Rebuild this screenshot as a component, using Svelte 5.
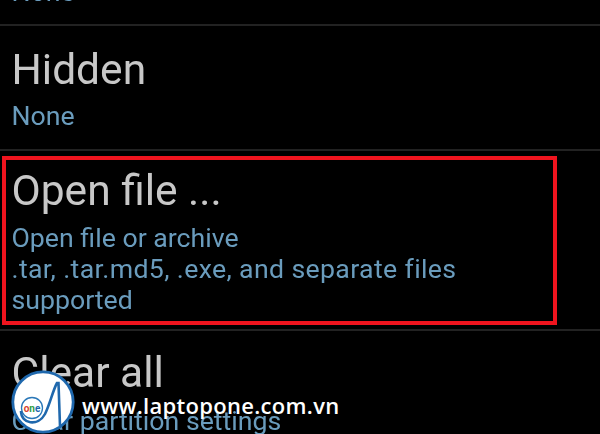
<script>
  const rows = [
    { kind: 'first', title: null, lines: ['None'] },
    { kind: 'hidden', title: 'Hidden', lines: ['None'] },
    {
      kind: 'open',
      title: 'Open file ...',
      lines: ['Open file or archive', '.tar, .tar.md5, .exe, and separate files', 'supported'],
      marked: true
    },
    { kind: 'clear', title: 'Clear all', lines: ['Clear partition settings'] }
  ];
</script>

<div class="screen">
  <div class="list">
    {#each rows as row}
      <div class="row {row.kind}">
        {#if row.title}
          <div class="title">{row.title}</div>
        {/if}
        {#each row.lines as line}
          <div class="sub">{line}</div>
        {/each}
        {#if row.marked}
          <div class="mark"></div>
        {/if}
      </div>
    {/each}
  </div>

  <div class="brand">
    <svg class="logo" viewBox="0 0 64 64" width="64" height="64">
      <circle cx="32" cy="32" r="30.2" fill="#fff" stroke="#1f68ad" stroke-width="2.8" />
      <circle cx="21" cy="38" r="10.5" fill="#fff" stroke="#2b78b8" stroke-width="1.3" />
      <path d="M10 41 C10 54 27 57 34 44 C39 34 42 20 46 13 L47.5 13 L49 56" fill="none" stroke="#1f68ad" stroke-width="2.6" />
      <text x="21" y="41.5" class="one">
        <tspan fill="#d8402f">o</tspan><tspan fill="#2f9e44">n</tspan><tspan fill="#1f68ad">e</tspan>
      </text>
    </svg>
    <span class="url">www.laptopone.com.vn</span>
  </div>
</div>

<style>
  :global(body) {
    background: #000;
  }

  .screen {
    position: relative;
    width: 600px;
    height: 434px;
    overflow: hidden;
    background: #000;
    font-family: Roboto, "Noto Sans", sans-serif;
  }

  .list {
    margin-top: -23px;
    filter: blur(0.6px);
  }

  .row {
    position: relative;
    padding: 16px 12px 15px 11.5px;
    border-bottom: 2px solid #222;
  }

  .row.first {
    padding: 0 12px 16px 11.5px;
  }

  .row.hidden {
    padding: 18px 12px 17px 11.5px;
  }

  .row.open {
    padding: 14px 12px 13px 11.5px;
  }

  .title {
    margin-bottom: 5px;
    font-size: 42.5px;
    line-height: 52px;
    color: #c8c8c8;
  }

  .open .title {
    margin-bottom: 6px;
  }

  .clear .title {
    margin-bottom: 7px;
  }

  .sub {
    font-size: 26.7px;
    line-height: 31px;
    color: #6a9cbd;
  }

  .open .sub:nth-child(3) {
    letter-spacing: 0.35px;
  }

  .mark {
    position: absolute;
    left: 2px;
    top: 5px;
    width: 547px;
    height: 161px;
    border: 4px solid #f0141e;
  }

  .brand {
    position: absolute;
    left: 11px;
    top: 370px;
    display: flex;
    align-items: center;
    gap: 7px;
  }

  .logo {
    display: block;
  }

  .one {
    font-size: 10px;
    font-weight: 700;
    text-anchor: middle;
  }

  .url {
    margin-top: 5px;
    font-family: "Open Sans", sans-serif;
    font-size: 22px;
    font-weight: 600;
    letter-spacing: 0.3px;
    color: #fff;
  }
</style>
